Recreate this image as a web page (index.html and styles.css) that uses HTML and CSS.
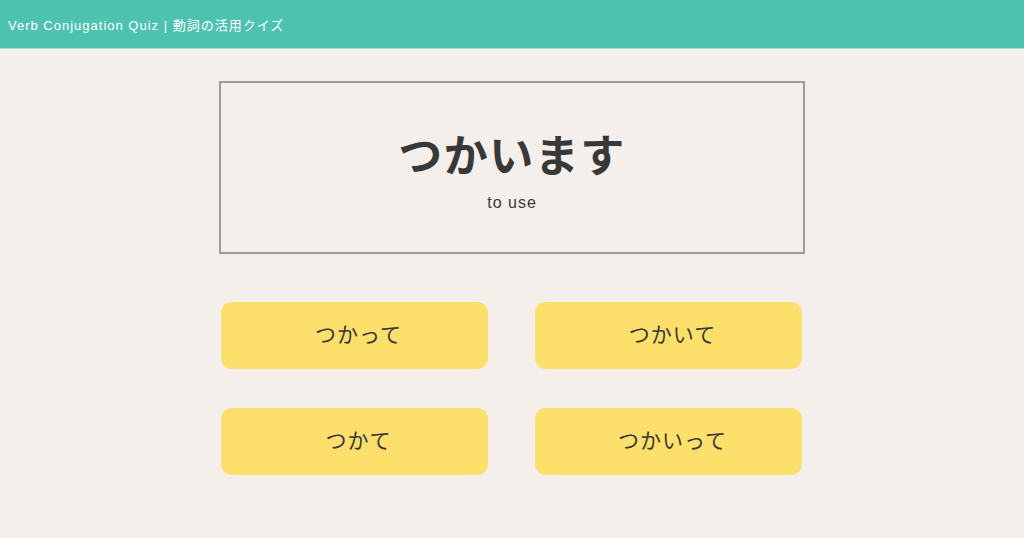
FILE: index.html
```html
<!DOCTYPE html>
<html lang="ja">
<head>
  <meta charset="UTF-8" />
  <meta name="viewport" content="width=device-width, initial-scale=1.0"/>
  <title>Verb Conjugation Quiz</title>
  <link rel="stylesheet" href="styles.css">
</head>
<body>

  <header class="topbar">
    <h1 class="topbar-title">Verb Conjugation Quiz | 動詞の活用クイズ</h1>
  </header>

  <main class="quiz">
    <div class="question">
      <div class="verb">つかいます</div>
      <div class="meaning">to use</div>
    </div>

    <div class="options">
      <button class="option">つかって</button>
      <button class="option">つかいて</button>
      <button class="option">つかて</button>
      <button class="option">つかいって</button>
    </div>
  </main>

</body>
</html>
```

FILE: styles.css
```css
* {
  box-sizing: border-box;
}

body {
  margin: 0;
  background: #f4efea;
  color: #383838;
  font-family: 'Liberation Sans', 'Noto Sans CJK JP', sans-serif;
}

.topbar {
  background: #4ec2b0;
  height: 49px;
  display: flex;
  align-items: center;
  padding: 0 8px;
  border-bottom: 1px solid #a8ddd4;
}

.topbar-title {
  margin: 0;
  color: #fff;
  font-size: 13px;
  font-weight: normal;
  letter-spacing: 1px;
}

.quiz {
  width: 586px;
  margin: 32px auto 0;
}

.question {
  border: 2px solid #a39b9a;
  height: 173px;
  padding-top: 44px;
  text-align: center;
}

.verb {
  font-family: 'Noto Sans CJK JP', sans-serif;
  font-size: 44px;
  font-weight: bold;
  line-height: 53px;
  letter-spacing: 1.5px;
}

.meaning {
  margin-top: 14px;
  font-size: 16px;
  line-height: 18px;
  letter-spacing: 1px;
}

.options {
  display: grid;
  grid-template-columns: 1fr 1fr;
  column-gap: 47px;
  row-gap: 39px;
  margin: 48px 3px 0 2px;
}

.option {
  height: 67px;
  padding: 0 0 5px 8px;
  border: none;
  border-radius: 11px;
  background: #fddf6b;
  color: #383838;
  font-family: 'Noto Sans CJK JP', sans-serif;
  font-size: 21px;
  letter-spacing: 1px;
  cursor: pointer;
}
```
